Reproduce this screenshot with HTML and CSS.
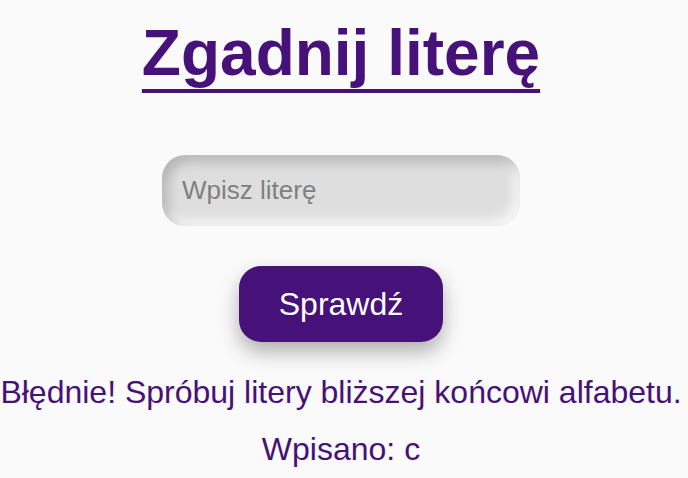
FILE: index.html
```html
<!DOCTYPE html>
<html lang="pl">
<head>
<meta charset="utf-8">
<title>Zgadnij literę</title>
<link rel="stylesheet" href="styles.css">
</head>
<body>
<main class="game">
  <h1 class="title">Zgadnij literę</h1>
  <input class="guess-input" type="text" placeholder="Wpisz literę">
  <button class="check-btn" type="button">Sprawdź</button>
  <p class="message">Błędnie! Spróbuj litery bliższej końcowi alfabetu.</p>
  <p class="entered">Wpisano: c</p>
</main>
</body>
</html>
```
FILE: styles.css
```css
html, body {
  margin: 0;
  padding: 0;
  background: #fafafa;
}
body {
  font-family: "Liberation Sans", Arial, sans-serif;
  color: #461178;
}
.game {
  width: 682px;
  display: flex;
  flex-direction: column;
  align-items: center;
  padding-top: 16px;
}
.title {
  margin: 0;
  font-size: 64px;
  font-weight: bold;
  line-height: 74px;
  text-decoration: underline;
  text-decoration-thickness: 4px;
  text-underline-offset: 14px;
  text-decoration-skip-ink: none;
  color: #461178;
}
.guess-input {
  margin-top: 65px;
  width: 358px;
  height: 71px;
  box-sizing: border-box;
  border: none;
  border-radius: 23px;
  padding: 0 20px;
  font-family: "Liberation Sans", Arial, sans-serif;
  font-size: 26px;
  color: #333;
  background: #dedede;
  box-shadow: inset 6px 7px 12px rgba(0,0,0,0.18), inset -6px -6px 12px rgba(255,255,255,0.75);
  outline: none;
}
.guess-input::placeholder {
  color: #808080;
}
.check-btn {
  margin-top: 40px;
  width: 204px;
  height: 76px;
  border: none;
  border-radius: 22px;
  background: #461178;
  color: #fff;
  font-family: "Liberation Sans", Arial, sans-serif;
  font-size: 32px;
  padding: 0;
  box-shadow: 0 10px 20px rgba(0,0,0,0.3);
}
.message {
  margin: 32px 0 0;
  font-size: 32px;
  line-height: 37px;
  white-space: nowrap;
}
.entered {
  margin: 20px 0 0;
  font-size: 32px;
  line-height: 37px;
}
```
